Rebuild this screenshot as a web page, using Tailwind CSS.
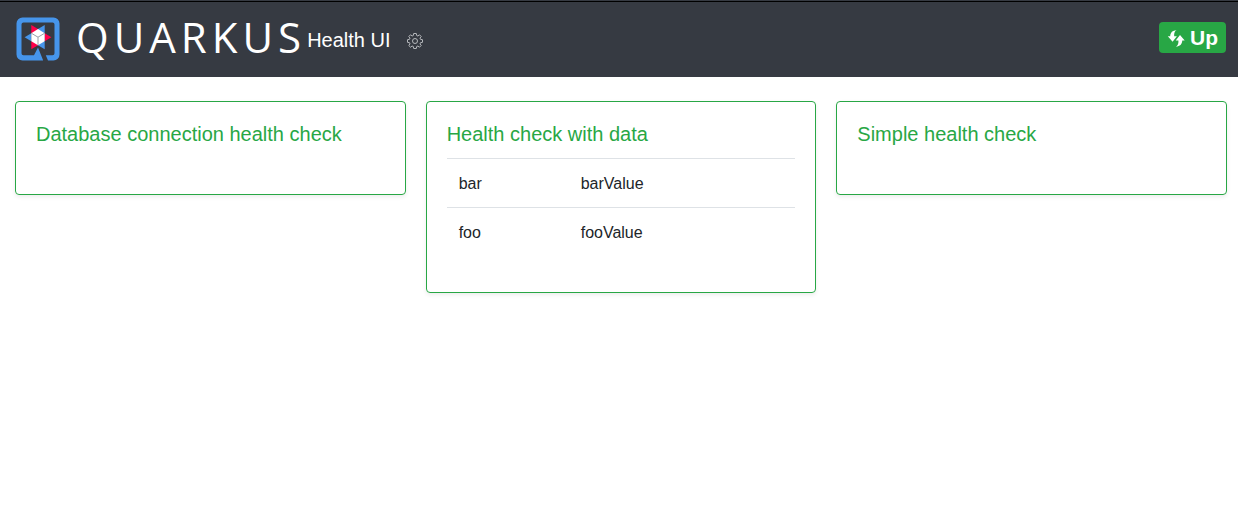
<!DOCTYPE html>
<html lang="en">
<head>
<meta charset="utf-8">
<meta name="viewport" content="width=device-width, initial-scale=1">
<title>Health UI</title>
<script src="https://cdn.jsdelivr.net/npm/@tailwindcss/browser@4"></script>
</head>
<body class="min-h-screen bg-white font-['Liberation_Sans',Arial,sans-serif] text-base text-[#212529]">
<div class="border-t border-[#363a42]">
<header class="flex items-center justify-between border-t border-black bg-[#363a42] pt-3.5 pr-3 pb-[15px] pl-4">
  <div class="flex items-center">
    <a href="#" class="flex items-center" aria-label="Quarkus">
      <svg class="size-11" viewBox="0 0 44 44" aria-hidden="true">
        <path fill="#4695eb" fill-rule="evenodd" d="M6.500 0.500H37.500A6 6 0 0 1 43.500 6.500V37.500A6 6 0 0 1 37.500 43.500H32L29.800 38.300H36.500A2 2 0 0 0 38.500 36.300V7.500A2 2 0 0 0 36.500 5.500H7.500A2 2 0 0 0 5.500 7.500V36.300A2 2 0 0 0 7.500 38.300H18L22 30.500L27.200 43.500H6.500A6 6 0 0 1 .5 37.500V6.500A6 6 0 0 1 6.500.5Z"/>
        <path fill="#ff004a" d="M15.300 8L22 12V16H15.300ZM35.400 20.200L28.700 24.200V16.200ZM15.300 32.300V24.500H22V28.300Z"/>
        <path fill="#4695eb" d="M28.700 8L22 12V16H28.700ZM8.600 20.200L15.300 24.200V16.200ZM28.700 32.300V24.500H22V28.300Z"/>
        <path fill="#fff" d="M22 12L28.700 16.200V24.200L22 28.300L15.300 24.200V16.200Z"/>
        <path fill="none" stroke="#99a0a8" stroke-width="1" d="M15.300 16.200L22 20.200L28.700 16.200M22 20.200V28.300"/>
      </svg>
      <span class="pb-1 pl-4 font-['Open_Sans'] text-[42px] leading-[42px] tracking-[5px] text-white">QUARKUS</span>
    </a>
    <h1 class="pt-0.5 pl-px text-xl leading-8 text-white">Health UI</h1>
    <button type="button" class="mt-1 ml-4 cursor-pointer text-[#c3c5c8]" aria-label="Settings">
      <svg class="size-4" viewBox="0 0 16 16" fill="none" stroke="currentColor" stroke-width=".9" aria-hidden="true">
        <path d="M6.700.5H9.300L9.700 2.500L10.900 3L12.500 1.800L14.200 3.500L13 5.100L13.500 6.300L15.500 6.700V9.300L13.500 9.700L13 10.900L14.200 12.500L12.500 14.200L10.900 13L9.700 13.500L9.300 15.500H6.700L6.300 13.500L5.100 13L3.500 14.200L1.800 12.500L3 10.900L2.500 9.700L.5 9.300V6.700L2.500 6.300L3 5.100L1.800 3.500L3.500 1.800L5.100 3L6.300 2.500Z"/>
        <circle cx="8" cy="8" r="2.500"/>
      </svg>
    </button>
  </div>
  <div class="mb-[3px] flex h-[31px] items-center gap-1 rounded bg-[#28a745] px-2 text-[21px] font-bold text-white">
    <svg class="mt-0.5 h-[17px] w-[19px]" viewBox="0 0 19 17" fill="currentColor" aria-hidden="true">
      <path d="M9.500.3C7.300 1.500 7 3.800 7.200 6.200H9.900L5.600 11.700L.8 6.200H3.200C3.500 2.500 5.500.4 9.500.3Z"/>
      <path d="M9 16.700C11.200 15.500 11.600 13 11.400 10.600H8.700L13 5.100L17.700 10.600H15.300C15 14.500 13 16.500 9 16.700Z"/>
    </svg>
    <span>Up</span>
  </div>
</header>
</div>
<main class="grid grid-cols-3 items-start gap-5 pt-6 pr-[11px] pb-6 pl-[15px]">
  <section class="rounded border border-[#28a745] p-5 shadow-[0_2px_4px_rgba(0,0,0,0.075)]">
    <h2 class="mb-7 text-xl leading-6 text-[#28a745]">Database connection health check</h2>
  </section>
  <section class="rounded border border-[#28a745] p-5 shadow-[0_2px_4px_rgba(0,0,0,0.075)]">
    <h2 class="mb-3 text-xl leading-6 text-[#28a745]">Health check with data</h2>
    <table class="mb-4 w-full table-fixed border-separate border-spacing-0">
      <tbody>
        <tr><td class="w-[35%] border-t border-[#dee2e6] px-3 pt-[13px] pb-[11px]">bar</td><td class="border-t border-[#dee2e6] px-3 pt-[13px] pb-[11px]">barValue</td></tr>
        <tr><td class="border-t border-[#dee2e6] px-3 pt-[13px] pb-[11px]">foo</td><td class="border-t border-[#dee2e6] px-3 pt-[13px] pb-[11px]">fooValue</td></tr>
      </tbody>
    </table>
  </section>
  <section class="rounded border border-[#28a745] p-5 shadow-[0_2px_4px_rgba(0,0,0,0.075)]">
    <h2 class="mb-7 text-xl leading-6 text-[#28a745]">Simple health check</h2>
  </section>
</main>
</body>
</html>
